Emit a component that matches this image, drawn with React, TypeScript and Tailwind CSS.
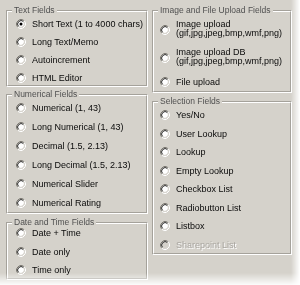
import React from "react";

function RadioIcon({ checked = false, disabled = false }: { checked?: boolean; disabled?: boolean }) {
  return (
    <svg width="10" height="10" viewBox="0 0 10 10" className="shrink-0">
      <circle cx="5" cy="5" r="3.2" fill={disabled ? "#d5d2cb" : "#ffffff"} />
      <path d="M1.82 8.18 A4.5 4.5 0 0 1 8.18 1.82" fill="none" stroke="#7c7972" strokeWidth="1" />
      <path d="M8.18 1.82 A4.5 4.5 0 0 1 1.82 8.18" fill="none" stroke="#ffffff" strokeWidth="1" />
      <path d="M2.53 7.47 A3.5 3.5 0 0 1 7.47 2.53" fill="none" stroke="#2e2e2e" strokeWidth="1" />
      <path d="M7.47 2.53 A3.5 3.5 0 0 1 2.53 7.47" fill="none" stroke="#d8d5cf" strokeWidth="1" />
      {checked && <circle cx="5" cy="5" r="1.5" fill="#000000" />}
    </svg>
  );
}

function Radio({
  label,
  checked = false,
  disabled = false,
}: {
  label: string;
  checked?: boolean;
  disabled?: boolean;
}) {
  return (
    <div className="flex h-[12px] items-center gap-[6px]">
      <RadioIcon checked={checked} disabled={disabled} />
      <span
        className={
          disabled
            ? "whitespace-nowrap leading-[12px] text-[#a8a59f] [text-shadow:1px_1px_0_#ffffff]"
            : "whitespace-nowrap leading-[12px] text-[#0a0a0a]"
        }
      >
        {label}
      </span>
    </div>
  );
}

function Group({
  title,
  className = "",
  children,
}: {
  title: string;
  className?: string;
  children: React.ReactNode;
}) {
  return (
    <div
      className={`border-t border-l border-r border-b border-t-[#a5a29b] border-l-[#a5a29b] border-r-white border-b-white ${className}`}
    >
      <div className="border-t border-l border-r border-b border-t-white border-l-white border-r-[#a5a29b] border-b-[#a5a29b]">
        <div className="-mt-[7px] ml-[4px] h-[11px] w-fit bg-[#d5d2cb] px-[2px] text-[8.5px] leading-[11px] text-[#505050]">
          {title}
        </div>
        {children}
      </div>
    </div>
  );
}

export default function App() {
  return (
    <div className="h-[285px] w-[300px] overflow-hidden bg-white font-['Liberation_Sans',Arial,sans-serif] text-[9px]">
      <div className="flex h-full w-full gap-[4px] bg-[#d5d2cb] pl-[6px] pt-[10px] [mask-image:linear-gradient(to_right,black_291px,transparent_300px),linear-gradient(to_bottom,black_273px,transparent_286px)] [mask-composite:intersect]">
        {/* Left column */}
        <div className="flex w-[142px] flex-col">
          <Group title="Text Fields">
            <div className="mt-[2px] flex flex-col gap-[6px] pb-[1px] pl-[8px]">
              <Radio label="Short Text (1 to 4000 chars)" checked />
              <Radio label="Long Text/Memo" />
              <Radio label="Autoincrement" />
              <Radio label="HTML Editor" />
            </div>
          </Group>
          <Group title="Numerical Fields" className="mt-[7px]">
            <div className="mt-[2px] flex flex-col gap-[7px] pb-[3px] pl-[8px]">
              <Radio label="Numerical (1, 43)" />
              <Radio label="Long Numerical (1, 43)" />
              <Radio label="Decimal (1.5, 2.13)" />
              <Radio label="Long Decimal (1.5, 2.13)" />
              <Radio label="Numerical Slider" />
              <Radio label="Numerical Rating" />
            </div>
          </Group>
          <Group title="Date and Time Fields" className="mt-[8px]">
            <div className="-mt-[1px] flex flex-col gap-[6.5px] pb-[2px] pl-[8px]">
              <Radio label="Date + Time" />
              <Radio label="Date only" />
              <Radio label="Time only" />
            </div>
          </Group>
        </div>

        {/* Right column */}
        <div className="flex w-[140px] flex-col">
          <Group title="Image and File Upload Fields">
            <div className="flex flex-col pb-[3px] pl-[6px]">
              <div className="mt-[4px] flex items-start gap-[6px]">
                <div className="mt-[5px]">
                  <RadioIcon />
                </div>
                <div className="leading-[9px] text-[#0a0a0a]">
                  <div>Image upload</div>
                  <div>(gif,jpg,jpeg,bmp,wmf,png)</div>
                </div>
              </div>
              <div className="mt-[10px] flex items-start gap-[6px]">
                <div className="mt-[5px]">
                  <RadioIcon />
                </div>
                <div className="leading-[9px] text-[#0a0a0a]">
                  <div>Image upload DB</div>
                  <div>(gif,jpg,jpeg,bmp,wmf,png)</div>
                </div>
              </div>
              <div className="mt-[10px]">
                <Radio label="File upload" />
              </div>
            </div>
          </Group>
          <Group title="Selection Fields" className="mt-[8px]">
            <div className="mt-[2px] flex flex-col gap-[6.5px] pb-[2px] pl-[6px]">
              <Radio label="Yes/No" />
              <Radio label="User Lookup" />
              <Radio label="Lookup" />
              <Radio label="Empty Lookup" />
              <Radio label="Checkbox List" />
              <Radio label="Radiobutton List" />
              <Radio label="Listbox" />
              <Radio label="Sharepoint List" disabled />
            </div>
          </Group>
        </div>
      </div>
    </div>
  );
}
